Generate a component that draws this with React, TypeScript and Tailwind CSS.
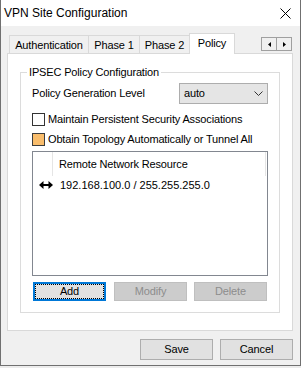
import React from "react";

function Tab({ label, width, selected, first }: { label: string; width: string; selected?: boolean; first?: boolean }) {
  if (selected) {
    return (
      <div className={`${width} -ml-px h-[21px] -mb-px relative z-10 bg-white border-l border-t border-r border-[#d9d9d9] flex items-center justify-center pb-[1px]`}>
        {label}
      </div>
    );
  }
  return (
    <div className={`${width} ${first ? "" : "-ml-px"} h-[18px] bg-[#f0f0f0] border-l border-t border-r border-[#d9d9d9] flex items-center justify-center pt-[1px]`}>
      {label}
    </div>
  );
}

function WinButton({ label, className }: { label: string; className?: string }) {
  return (
    <div className={`w-[73px] h-[21px] bg-[#e1e1e1] border border-[#adadad] flex items-center justify-center ${className ?? ""}`}>
      {label}
    </div>
  );
}

export default function App() {
  return (
    <div className="w-[301px] h-[368px] bg-[#ececec] text-[11px] leading-[13px] text-black tracking-[-0.15px] font-['Liberation_Sans',Arial,sans-serif]">
      <div className="w-[301px] h-[366px] border-x border-b border-[#707070] bg-[#f0f0f0] flex flex-col">
        {/* title bar */}
        <div className="h-[26px] bg-white flex items-center pl-[3px] pr-[9px]">
          <span className="text-[12px] tracking-normal">VPN Site Configuration</span>
          <svg className="ml-auto" width="11" height="11" viewBox="0 0 11 11">
            <path d="M0.5 0.5 L10.5 10.5 M10.5 0.5 L0.5 10.5" stroke="#000" strokeWidth="1" />
          </svg>
        </div>

        <div className="pl-[6px] pr-[7px]">
          {/* tabs */}
          <div className="mt-[7px] h-[20px] flex items-end pl-[2px]">
            <Tab label="Authentication" width="w-[80px]" first />
            <Tab label="Phase 1" width="w-[52px]" />
            <Tab label="Phase 2" width="w-[51px]" />
            <Tab label="Policy" width="w-[46px]" selected />
            <div className="ml-auto mr-[1px] mb-[2px] flex">
              <div className="w-[16px] h-[14px] border border-[#a0a0a0] bg-[#f0f0f0] flex items-center justify-center">
                <svg width="3" height="5" viewBox="0 0 3 5"><path d="M3 0 L0 2.5 L3 5 Z" fill="#000" /></svg>
              </div>
              <div className="w-[16px] h-[14px] -ml-px border border-[#a0a0a0] bg-[#f0f0f0] flex items-center justify-center">
                <svg width="3" height="5" viewBox="0 0 3 5"><path d="M0 0 L3 2.5 L0 5 Z" fill="#000" /></svg>
              </div>
            </div>
          </div>

          {/* panel */}
          <div className="h-[278px] bg-white border border-[#d9d9d9] px-[12px] pt-[12px]">
            <fieldset className="border border-[#dcdcdc] px-[11px] pb-[11px]">
              <legend className="-ml-[5px] px-[2px] leading-[13px]">IPSEC Policy Configuration</legend>

              <div className="mt-[4px] h-[21px] flex items-center justify-between">
                <span>Policy Generation Level</span>
                <div className="w-[89px] h-[21px] bg-[#e5e5e5] border border-[#adadad] flex items-center pl-[4px] pr-[4px]">
                  <span>auto</span>
                  <svg className="ml-auto" width="9" height="5" viewBox="0 0 9 5">
                    <path d="M0.5 0.5 L4.5 4.5 L8.5 0.5" stroke="#333" strokeWidth="1" fill="none" />
                  </svg>
                </div>
              </div>

              <div className="mt-[9px] h-[13px] flex items-center gap-[3px]">
                <div className="w-[13px] h-[13px] border border-[#333] bg-white" />
                <span>Maintain Persistent Security Associations</span>
              </div>

              <div className="mt-[7px] h-[13px] flex items-center gap-[3px]">
                <div className="w-[13px] h-[13px] border border-[#3c3c3c] bg-[#f9bd6c]" />
                <span>Obtain Topology Automatically or Tunnel All</span>
              </div>

              {/* list view */}
              <div className="mt-[5px] h-[125px] border border-[#828790] bg-white">
                <div className="h-[24px] flex">
                  <div className="w-[20px] border-r border-[#e5e5e5]" />
                  <div className="flex-1 flex items-center pl-[6px] border-r border-[#e5e5e5] mr-[1px]">
                    Remote Network Resource
                  </div>
                </div>
                <div className="h-[18px] flex items-center tracking-normal">
                  <div className="w-[21px] flex justify-end pr-[1px]">
                    <svg width="14" height="8" viewBox="0 0 14 8">
                      <path d="M0 4 L4.5 0 L4.5 3 L9.5 3 L9.5 0 L14 4 L9.5 8 L9.5 5 L4.5 5 L4.5 8 Z" fill="#000" />
                    </svg>
                  </div>
                  <span className="pl-[6px]">192.168.100.0 / 255.255.255.0</span>
                </div>
              </div>

              {/* list buttons */}
              <div className="mt-[6px] flex">
                <div className="ml-[1px] w-[73px] h-[19px] border-2 border-[#0078d7] bg-[#e1e1e1] p-0">
                  <div className="h-full border border-dotted border-black flex items-center justify-center">
                    Add
                  </div>
                </div>
                <div className="ml-[8px] w-[73px] h-[19px] border border-[#bfbfbf] bg-[#cccccc] text-[#8d8d8d] flex items-center justify-center">
                  Modify
                </div>
                <div className="ml-[7px] w-[73px] h-[19px] border border-[#bfbfbf] bg-[#cccccc] text-[#8d8d8d] flex items-center justify-center">
                  Delete
                </div>
              </div>
            </fieldset>
          </div>

          {/* dialog buttons */}
          <div className="mt-[8px] flex justify-end gap-[7px]">
            <WinButton label="Save" />
            <WinButton label="Cancel" />
          </div>
        </div>
      </div>
    </div>
  );
}
